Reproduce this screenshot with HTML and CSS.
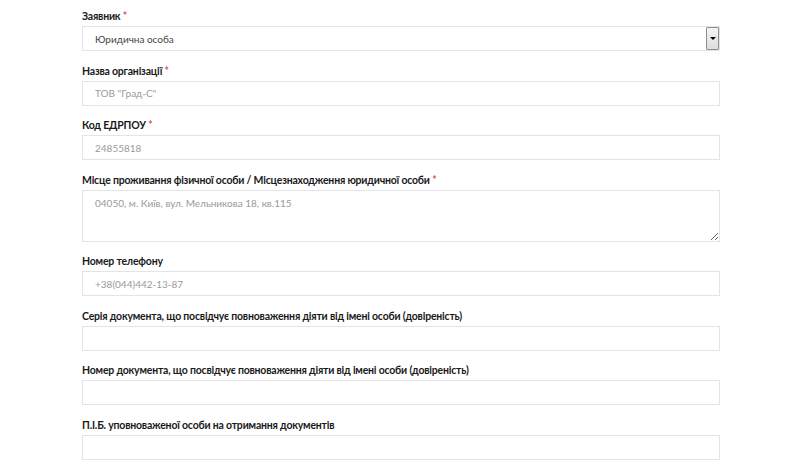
FILE: index.html
```html
<!DOCTYPE html>
<html lang="uk">
<head>
<meta charset="utf-8">
<link rel="stylesheet" href="styles.css">
</head>
<body>
<form class="form">
  <div class="field">
    <label class="label">Заявник <span class="req">*</span></label>
    <div class="select-wrap">
      <div class="select">Юридична особа</div>
      <span class="select-btn"><span class="tri"></span></span>
    </div>
  </div>
  <div class="field">
    <label class="label">Назва організації <span class="req">*</span></label>
    <input class="input" type="text" placeholder="ТОВ &quot;Град-С&quot;">
  </div>
  <div class="field">
    <label class="label">Код ЕДРПОУ <span class="req">*</span></label>
    <input class="input" type="text" placeholder="24855818">
  </div>
  <div class="field">
    <label class="label">Місце проживання фізичної особи / Місцезнаходження юридичної особи <span class="req">*</span></label>
    <textarea class="textarea" placeholder="04050, м. Київ, вул. Мельникова 18, кв.115"></textarea>
  </div>
  <div class="field">
    <label class="label">Номер телефону</label>
    <input class="input" type="text" placeholder="+38(044)442-13-87">
  </div>
  <div class="field">
    <label class="label">Серія документа, що посвідчує повноваження діяти від імені особи (довіреність)</label>
    <input class="input" type="text">
  </div>
  <div class="field">
    <label class="label">Номер документа, що посвідчує повноваження діяти від імені особи (довіреність)</label>
    <input class="input" type="text">
  </div>
  <div class="field">
    <label class="label">П.І.Б. уповноваженої особи на отримання документів</label>
    <input class="input" type="text">
  </div>
</form>
</body>
</html>
```
FILE: styles.css
```css
* { box-sizing: border-box; }
html, body { margin: 0; padding: 0; background: #fff; overflow: hidden; }
body { font-family: "Lato", "Open Sans", sans-serif; color: #333; }
.form {
  width: 638px;
  margin: 0 0 0 82px;
  padding-top: 9px;
  display: flex;
  flex-direction: column;
  gap: 12.5px;
}
.field { display: flex; flex-direction: column; gap: 3px; }
.label {
  font-family: "Lato", "Open Sans", sans-serif;
  font-weight: 700;
  font-size: 10.5px;
  line-height: 14px;
  color: #1a1a1a;
  letter-spacing: -0.2px;
}
.req { color: #d9534f; }
.input, .select, .textarea {
  display: block;
  width: 100%;
  height: 25px;
  border: 1px solid #e3e3e8;
  background: #fff;
  font-family: "Lato", "Open Sans", sans-serif;
  font-size: 10px;
  color: #333;
  padding: 0 12px;
  outline: none;
  margin: 0;
}
.input::placeholder, .textarea::placeholder { color: #9a9a9a; opacity: 1; }
.select { display: flex; align-items: center; color: #444; }
.select-wrap { position: relative; }
.select-btn {
  position: absolute;
  right: 1px;
  top: 1px;
  bottom: 1px;
  width: 13px;
  border: 1px solid #8e8e8e;
  border-radius: 1px;
  background: linear-gradient(#f4f4f4, #dcdcdc);
  display: flex;
  align-items: center;
  justify-content: center;
}
.tri {
  width: 0; height: 0;
  border-left: 3px solid transparent;
  border-right: 3px solid transparent;
  border-top: 3px solid #000;
}
.textarea {
  height: 52px;
  padding: 5px 12px;
  resize: vertical;
  line-height: 14px;
}
```
